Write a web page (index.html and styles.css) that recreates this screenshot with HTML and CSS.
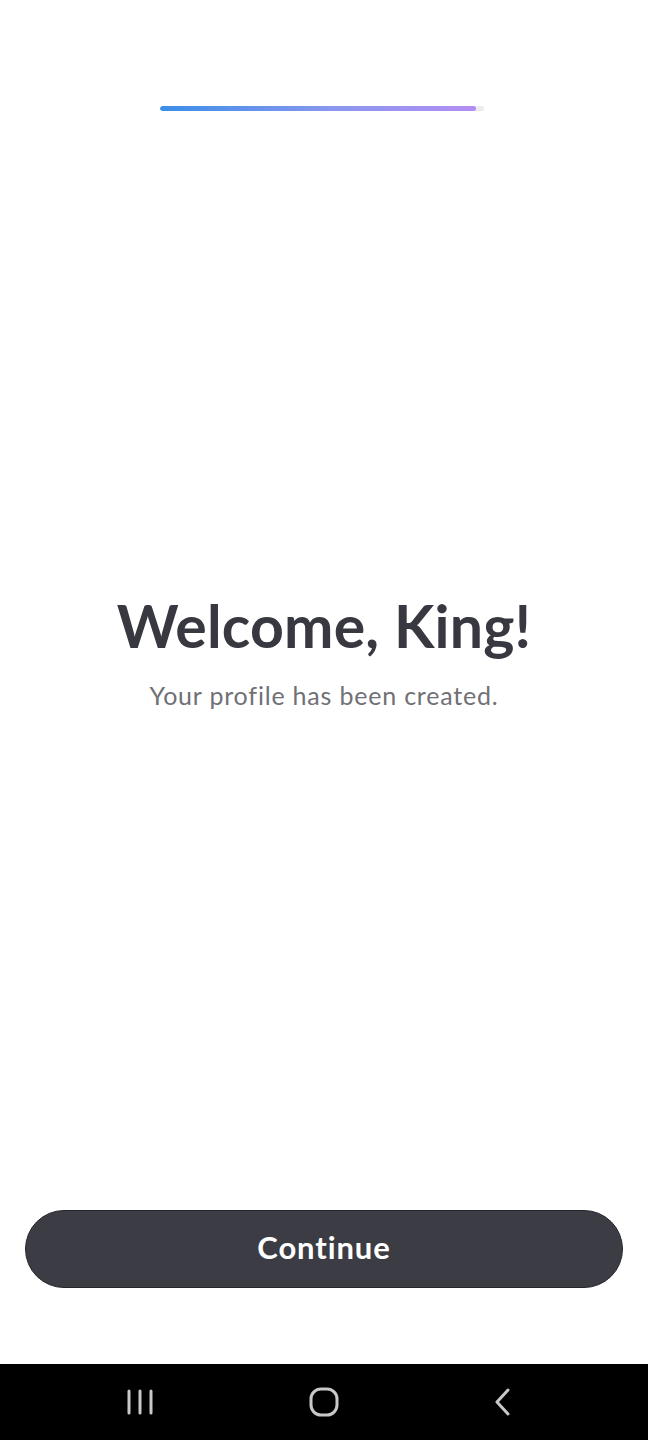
FILE: index.html
```html
<!DOCTYPE html>
<html lang="en">
<head>
<meta charset="utf-8">
<link rel="stylesheet" href="styles.css">
</head>
<body>
<div class="screen">
  <div class="top">
    <div class="progress"><div class="progress-fill"></div></div>
  </div>
  <div class="center">
    <h1 class="title">Welcome, King!</h1>
    <p class="subtitle">Your profile has been created.</p>
  </div>
  <div class="bottom">
    <button class="continue">Continue</button>
  </div>
  <nav class="navbar">
    <svg class="nav-icon" width="28" height="28" viewBox="0 0 28 28"><g stroke="#c8c8c8" stroke-width="3" stroke-linecap="round"><line x1="3" y1="3" x2="3" y2="25"/><line x1="14" y1="3" x2="14" y2="25"/><line x1="25" y1="3" x2="25" y2="25"/></g></svg>
    <svg class="nav-icon" width="30" height="30" viewBox="0 0 30 30"><rect x="2" y="2" width="26" height="26" rx="10" fill="none" stroke="#c8c8c8" stroke-width="3"/></svg>
    <svg class="nav-icon" width="20" height="30" viewBox="0 0 20 30"><polyline points="15,3 4,15 15,27" fill="none" stroke="#c8c8c8" stroke-width="3" stroke-linecap="round" stroke-linejoin="round"/></svg>
  </nav>
</div>
</body>
</html>
```

FILE: styles.css
```css
html, body {
  margin: 0;
  padding: 0;
  background: #ffffff;
}
.screen {
  width: 648px;
  height: 1440px;
  display: flex;
  flex-direction: column;
  font-family: Lato, "Noto Sans", sans-serif;
}
.top {
  height: 160px;
  display: flex;
  justify-content: center;
  padding-top: 106px;
  box-sizing: border-box;
}
.progress {
  width: 324px;
  height: 5px;
  margin-left: -4px;
  border-radius: 3px;
  background: #ececf0;
  overflow: hidden;
}
.progress-fill {
  width: 316px;
  height: 100%;
  border-radius: 3px;
  background: linear-gradient(90deg, #3b8ee8 0%, #8a97ee 55%, #b38ef2 100%);
}
.center {
  flex: 1;
  display: flex;
  flex-direction: column;
  align-items: center;
  padding-top: 430px;
}
.title {
  margin: 0;
  font-size: 59px;
  font-weight: 700;
  color: #383840;
  letter-spacing: 0.2px;
  line-height: 72px;
}
.subtitle {
  margin: 18px 0 0;
  font-size: 25px;
  font-weight: 400;
  color: #707075;
  letter-spacing: 0.8px;
}
.bottom {
  height: 154px;
  padding: 0 25px;
  box-sizing: border-box;
}
.continue {
  width: 598px;
  height: 78px;
  padding: 0 0 5px;
  border-radius: 39px;
  border: 1.5px solid #25252b;
  background: #3c3c44;
  color: #ffffff;
  font-family: Lato, "Noto Sans", sans-serif;
  font-size: 31px;
  font-weight: 700;
  letter-spacing: 0.9px;
  cursor: pointer;
}
.navbar {
  height: 76px;
  background: #000000;
  display: flex;
  align-items: center;
  justify-content: space-between;
  padding: 0 135px 0 126px;
}
.nav-icon {
  display: block;
}
```
